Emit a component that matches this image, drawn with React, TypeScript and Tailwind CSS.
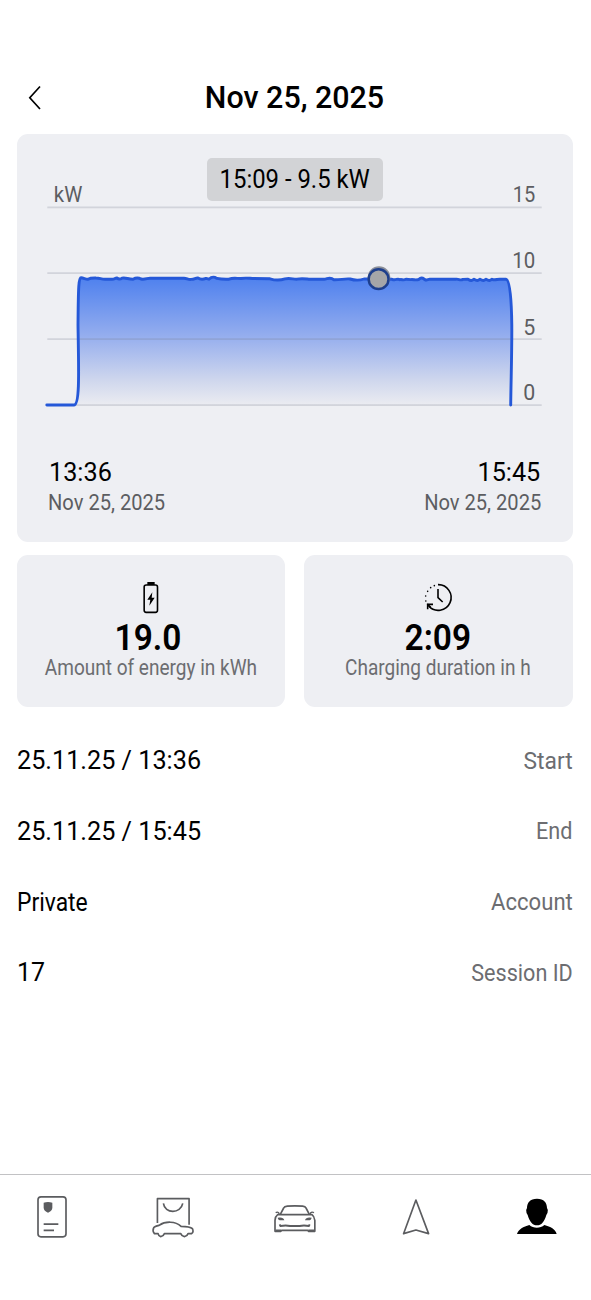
import type { ReactNode } from 'react';

const axis = [
  { value: '15', y: 202.4, line: 207.4, width: 21.5 },
  { value: '10', y: 268.4, line: 273.2, width: 22 },
  { value: '5', y: 334.7, line: 339.2, width: 11 },
  { value: '0', y: 400.1, line: 405.1, width: 11 },
];

const topEdge =
  'C78.3 285 78.8 277.6 81 277.7 C84 278 85.5 279.3 88 279.2 C90 278 92 277.9 96 278 C100 278 101 279.3 105 279.3 L112 279.3 C115 279.3 115 277.8 117 278 C119 279.6 120 279.4 122 278.2 C126 277.4 128 279.3 133 279.2 C136 277.5 139 277.8 141 279 C145 279.8 147 278.2 150 278.2 L184 278.2 C187 278.2 188 279.8 191 279.4 C195 279.4 195 277.8 198 278 C201 280 203 279.5 206 278.4 L209 279.2 C212 276.4 214 276.7 217 278.4 C222 279.5 225 279.3 229 279.2 C233 277.5 237 278.6 241 278.5 C246 277.5 250 278.5 254 278.5 L270 278.8 C275 280.4 281 280.2 285 278.9 C290 277.5 293 279.4 297 279.2 C302 278 306 279 310 279.3 L324 279.3 C328 278.8 330 276.5 334 279.8 C340 280 345 278.5 350 279 C355 280.5 360 280.4 364 279 L392 279.3 C396 280.8 397 278 400 279.7 C402 279 403 280.8 406 279.3 L411 279.6 C414 279.3 416 280.6 419 279.3 C422 276 424 279.5 426 280.2 L430 279.2 L456 279.2 C459 278.8 460 280.8 463 279.4 L468 279.2 C471 281.2 472 280.6 474 279.3 C477 281.2 478 280.6 480 279.3 C483 281.2 484 280.6 486 279.3 C489 281.2 490 280.6 492 279.3 C495 280.4 497 279.2 500 279.3 L506 279.3 C510 279.3 511.5 300 511.8 325 C512 350 511 380 510.7 405';

function ChargingChart() {
  return (
    <svg className="block w-full" height="310" viewBox="17 134 556 310">
      <defs>
        <linearGradient id="power" x1="0" y1="278" x2="0" y2="405" gradientUnits="userSpaceOnUse">
          <stop offset="0" stopColor="#4f81ee" />
          <stop offset="0.45" stopColor="#94adee" />
          <stop offset="0.8" stopColor="#ced6ed" />
          <stop offset="1" stopColor="#ebecf1" />
        </linearGradient>
      </defs>
      <path d={`M76 405 C79.5 400 78.7 360 78 325 ${topEdge} Z`} fill="url(#power)" />
      {axis.map((tick) => (
        <g key={tick.value}>
          <path d={`M47.3 ${tick.line}H541.7`} stroke="#70758a" strokeOpacity="0.22" strokeWidth="1.8" />
          <text
            x="535.2"
            y={tick.y}
            textAnchor="end"
            textLength={tick.width + 1}
            lengthAdjust="spacingAndGlyphs"
            className="fill-[#5c5d61] font-[Roboto,sans-serif] text-[22px]"
          >
            {tick.value}
          </text>
        </g>
      ))}
      <text
        x="53.8"
        y="202.4"
        textLength="28.5"
        lengthAdjust="spacingAndGlyphs"
        className="fill-[#5c5d61] font-[Roboto,sans-serif] text-[22px]"
      >
        kW
      </text>
      <path
        d={`M46.8 405 H74 C80 405 78.7 370 78 325 ${topEdge}`}
        fill="none"
        stroke="#2558d8"
        strokeWidth="2.9"
        strokeLinecap="round"
        strokeLinejoin="round"
      />
      <circle cx="379" cy="277.6" r="11.3" fill="#8b8f99" />
      <circle cx="378.6" cy="279.2" r="9.9" fill="#a5a6a8" stroke="#1e3f8c" strokeWidth="2.5" />
    </svg>
  );
}

function StatCard({ icon, value, label }: { icon: ReactNode; value: ReactNode; label: ReactNode }) {
  return (
    <div className="flex h-[152px] flex-1 flex-col items-center rounded-[11px] bg-[#eeeff3] pt-[25.500px]">
      {icon}
      <div className="mt-[1px] h-[44px] text-[36px] leading-[44px] font-semibold">{value}</div>
      <div className="-mt-[4px] h-[24px] text-[21.5px] leading-[24px] whitespace-nowrap text-[#6c6d71]">{label}</div>
    </div>
  );
}

function BatteryIcon() {
  return (
    <svg width="36" height="35" viewBox="38 31 108 105">
      <rect x="71.500" y="46" width="40" height="82" rx="6" fill="none" stroke="#000" strokeWidth="4.8" />
      <path d="M81 37H103V46H81Z" />
      <path d="M96 68 L81 90 H90 L87 108 L103 84 H94 Z" />
    </svg>
  );
}

function ClockIcon() {
  return (
    <svg width="36" height="35" viewBox="30 31 108 105" fill="none" stroke="#000" strokeWidth="4.8">
      <path d="M84 45 A38.5 38.5 0 1 1 56 109" />
      <path d="M84 58V84L98 97" />
      <path d="M53 119V104H69" />
      <path d="M52 103L62 113" />
      <path d="M47.5 94v.1M47 79v.1M53 65v.1M62 54v.1M73 48v.1" strokeLinecap="round" />
    </svg>
  );
}

const rows = [
  { value: '25.11.25 / 13:36', label: 'Start', valueClass: 'scale-x-[0.97]', labelClass: 'scale-x-[0.95]' },
  { value: '25.11.25 / 15:45', label: 'End', valueClass: 'scale-x-[0.97]', labelClass: 'scale-x-[0.9]' },
  { value: 'Private', label: 'Account', valueClass: 'scale-x-[0.88]', labelClass: 'scale-x-[0.92]' },
  { value: '17', label: 'Session ID', valueClass: 'scale-x-[0.96]', labelClass: 'scale-x-[0.9]' },
];

function TabBar() {
  const line = { fill: 'none', stroke: '#5b5c5f', strokeWidth: 5, strokeLinejoin: 'round' as const };
  return (
    <nav className="flex h-[126px] items-start justify-between border-t border-[#c2c2c4] pt-[15px] pr-[30px] pl-7">
      <svg width="48" height="52" viewBox="24 75 144 156" {...line}>
        <rect x="54" y="95.500" width="84" height="120" rx="9" />
        <path d="M71 113Q84 109 97 113V129Q96 138 84 143Q72 138 71 129Z" fill="#5b5c5f" stroke="none" />
        <path d="M71 177.500H115M71 196H102" />
      </svg>
      <svg width="48" height="52" viewBox="387.75 75 144 156" {...line}>
        <path d="M413 174V101H508V179" />
        <path d="M431 115C435 147 483 147 489 115" />
        <path d="M415 206H404Q397 198 402 188Q404 184 418 181C437 168 467 168 484 184Q511 184 518 191Q523 202 515 206H505Q502 214 494 215Q486 214 483 206H434Q431 214 423 215Q416 213 415 206Z" />
      </svg>
      <svg width="48" height="52" viewBox="63 75 144 156" {...line}>
        <path d="M91 148L101 129Q103 124 112 123.500Q134 122 158 123.500Q166 124 168 129L178 148" />
        <path d="M77 143Q82 140 86 143L88 149M192 143Q186 140 182 143L180 149" strokeWidth="4" />
        <path d="M83 149H186Q193 154 194.500 166V199H176L173 196H95L92 199H75V166Q76 154 83 149Z" />
        <path d="M83 158Q100 155 103 166H89Q84 165 83 158ZM185 158Q168 155 165 166H179Q184 165 185 158Z" fill="#5b5c5f" stroke="none" />
        <path d="M89 178L91 183Q108 180 120 183H149Q161 180 177 183L179 178" strokeWidth="5.500" />
        <path d="M77 197H93M175 197H192" strokeWidth="7" />
      </svg>
      <svg width="48" height="52" viewBox="425.25 75 144 156" {...line}>
        <path d="M497 105L535 206L497 195L460 206Z" />
      </svg>
      <svg width="48" height="52" viewBox="69 75 144 156">
        <path d="M141 101C162 101 171 113 171 129L173.500 135Q173.500 146 169 150C163 171 154 181 141 181C128 181 119 171 113 150Q108.500 146 108.500 135L111 129C111 113 120 101 141 101Z" />
        <path d="M118 180C130 191 151 191 163 180C182 185 196 193 200 207H81C86 193 100 185 118 180Z" />
      </svg>
    </nav>
  );
}

export default function App() {
  return (
    <div className="flex h-[1300px] w-full flex-col bg-white font-[Roboto,sans-serif] text-black">
      <header className="grid h-[133.600px] shrink-0 grid-cols-[60px_1fr_60px] items-center pt-[60px]">
        <svg className="mt-[2px] ml-[28px]" width="14" height="27" viewBox="0 0 14 27" fill="none" stroke="#000" strokeWidth="1.7">
          <path d="M12 2.500L1.800 13.700L12 25" />
        </svg>
        <h1 className="-translate-x-[1px] scale-x-[0.95] text-center text-[32px] leading-[40px] font-medium">
          Nov 25, 2025
        </h1>
      </header>

      <main className="flex flex-1 flex-col pr-[18.5px] pl-[16.5px]">
        <section className="relative h-[408px] shrink-0 rounded-[11px] bg-[#eeeff3]">
          <ChargingChart />
          <div className="absolute top-[24.400px] left-[190.500px] flex h-[43px] w-[176px] items-center justify-center rounded-[5px] bg-[#d2d3d6]">
            <span className="scale-x-[0.955] text-[25px] whitespace-nowrap">15:09 - 9.5 kW</span>
          </div>
          <div className="flex justify-between pt-[13px] pr-[31px] pl-[31px]">
            <div>
              <div className="origin-left translate-x-[1px] scale-x-[0.97] text-[26px] leading-[30px]">13:36</div>
              <div className="origin-left scale-x-[0.935] text-[21.5px] leading-[31px] text-[#5c5d61]">Nov 25, 2025</div>
            </div>
            <div className="text-right">
              <div className="origin-right -translate-x-[1px] scale-x-[0.97] text-[26px] leading-[30px]">15:45</div>
              <div className="origin-right scale-x-[0.935] text-[21.5px] leading-[31px] text-[#5c5d61]">Nov 25, 2025</div>
            </div>
          </div>
        </section>

        <section className="mt-[13px] flex shrink-0 gap-[19px]">
          <StatCard
            icon={<BatteryIcon />}
            value={<span className="inline-block -translate-x-[3px] scale-x-[0.93]">19.0</span>}
            label={<span className="inline-block scale-x-[0.885]">Amount of energy in kWh</span>}
          />
          <StatCard
            icon={<ClockIcon />}
            value={<span className="inline-block scale-x-[0.93]">2:09</span>}
            label={<span className="inline-block scale-x-[0.885]">Charging duration in h</span>}
          />
        </section>

        <dl className="mt-[18.600px]">
          {rows.map((row) => (
            <div key={row.value} className="flex h-[70.800px] items-center justify-between">
              <dt className={`origin-left text-[26px] ${row.valueClass}`}>{row.value}</dt>
              <dd className={`origin-right text-[24px] text-[#6c6d71] ${row.labelClass}`}>{row.label}</dd>
            </div>
          ))}
        </dl>
      </main>

      <TabBar />
    </div>
  );
}
